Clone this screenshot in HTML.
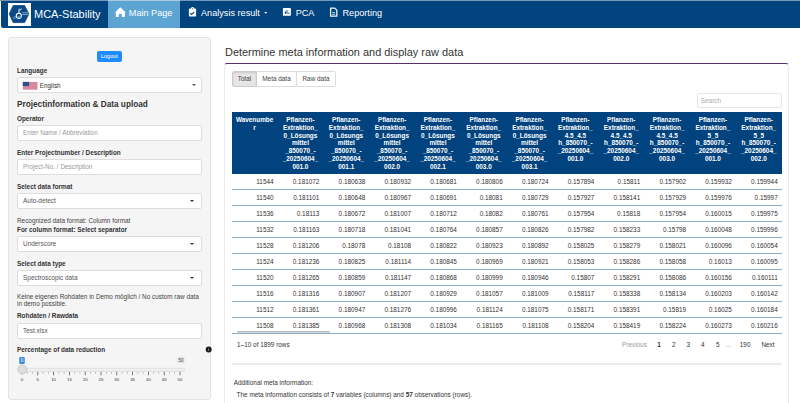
<!DOCTYPE html>
<html><head><meta charset="utf-8">
<style>
*{box-sizing:border-box;margin:0;padding:0}
html,body{width:800px;height:403px;overflow:hidden;background:#fff;font-family:"Liberation Sans",sans-serif;color:#333}
body{position:relative}
.a{position:absolute;white-space:nowrap}
#nav{position:absolute;left:1px;top:0;width:799px;height:28px;background:#01447e;border-top:1px solid #7398bd;border-radius:0 0 0 2px}
#topl{position:absolute;left:0;top:0;width:800px;height:1px;background:#7398bd}
#act{position:absolute;left:107.5px;top:0;width:72.5px;height:28px;background:#5ca5d3;border-top:1px solid #a9cbe3}
#logo{position:absolute;left:8px;top:3px;width:23px;height:23px;background:#fff}
.nt{color:#fff;font-size:9.15px;line-height:11px;top:7.7px}
#well{position:absolute;left:8px;top:37px;width:203px;height:363px;background:#f5f5f5;border:1px solid #e3e3e3;border-radius:3px}
.lb{font-weight:bold;font-size:6.4px;line-height:8px;color:#333}
.tx{font-size:6.4px;line-height:8px;color:#444}
.inp{position:absolute;left:17px;width:185px;height:16px;background:#fff;border:1px solid #ddd;border-radius:2px}
.it{position:absolute;left:5.1px;top:3.4px;font-size:6.4px;line-height:8px;color:#555;white-space:nowrap}
.ph{color:#999}
.caret{position:absolute;right:7.3px;top:5.6px;width:0;height:0;border-left:2.4px solid transparent;border-right:2.4px solid transparent;border-top:2.8px solid #333}
#card{position:absolute;left:224px;top:63px;width:565px;height:360px;background:#fff;border:1px solid #ececec;border-top:1.5px solid #5b2e6f;border-radius:3px 3px 0 0}
.tab{position:absolute;top:71px;height:16px;border:1px solid #ddd;font-size:6.4px;color:#444;text-align:center;line-height:14px;background:#fff}
#thead{position:absolute;left:231.7px;top:111.8px;width:550.3px;height:61.8px;background:#01437f}
.hc{position:absolute;top:115.9px;width:45.83px;text-align:center;font-weight:bold;font-size:6.4px;line-height:7.86px;color:#fff;white-space:nowrap}
.row{position:absolute;left:231.7px;width:550.3px;height:1px;background:#8eadc9}
.c{position:absolute;font-size:6.4px;line-height:15px;color:#333;text-align:right;width:41.9px;white-space:nowrap}
.pg{position:absolute;top:340.6px;font-size:6.4px;line-height:8px;color:#333;white-space:nowrap}
</style></head><body>
<div id="topl"></div><div id="nav"></div>
<div id="act"></div>
<div id="logo"></div>
<div class="a" style="left:34px;top:8.3px;color:#fff;font-size:11px;line-height:13px">MCA-Stability</div>
<div class="a nt" style="left:128.8px">Main Page</div>
<div class="a nt" style="left:201px">Analysis result</div>
<div class="a nt" style="left:295.7px">PCA</div>
<div class="a nt" style="left:342.5px">Reporting</div>

<div id="well"></div>
<div class="a" style="left:97.2px;top:50.9px;width:24.4px;height:10.7px;background:#1f8bff;border-radius:2px;color:#fff;font-size:5.5px;line-height:10.7px;text-align:center">Logout</div>
<div class="a lb" style="left:17px;top:67.3px">Language</div>
<div class="inp" style="top:77px"><div class="it" style="left:21.7px;top:3.8px;color:#333">English</div><div class="caret" style="right:4.9px;top:5.8px;border-left-width:2.1px;border-right-width:2.1px;border-top:2.3px solid #4a5060"></div></div>
<div class="a" style="left:17px;top:99.9px;font-weight:bold;font-size:8.24px;line-height:10px;color:#333">Projectinformation &amp; Data upload</div>
<div class="a lb" style="left:17px;top:115.2px">Operator</div>
<div class="inp" style="top:125px"><div class="it ph">Enter Name / Abbreviation</div></div>
<div class="a lb" style="left:17px;top:148.8px">Enter Projectnumber / Description</div>
<div class="inp" style="top:159px"><div class="it ph">Project-No. / Description</div></div>
<div class="a lb" style="left:17px;top:182.9px">Select data format</div>
<div class="inp" style="top:193px"><div class="it">Auto-detect</div><div class="caret"></div></div>
<div class="a tx" style="left:17px;top:216.7px">Recognized data format: Column format</div>
<div class="a lb" style="left:17px;top:225.8px">For column format: Select separator</div>
<div class="inp" style="top:236px"><div class="it">Underscore</div><div class="caret"></div></div>
<div class="a lb" style="left:17px;top:259.9px">Select data type</div>
<div class="inp" style="top:270px"><div class="it">Spectroscopic data</div><div class="caret"></div></div>
<div class="a tx" style="left:17px;top:293.2px">Keine eigenen Rohdaten in Demo möglich / No custom raw data</div>
<div class="a tx" style="left:17px;top:300.1px">in demo possible.</div>
<div class="a lb" style="left:17px;top:312.4px">Rohdaten / Rawdata</div>
<div class="inp" style="top:323px"><div class="it">Test.xlsx</div></div>
<div class="a lb" style="left:17px;top:346.2px">Percentage of data reduction</div>

<div class="a" style="left:225px;top:46.2px;font-size:10.95px;line-height:13px;color:#333">Determine meta information and display raw data</div>
<div id="card"></div>
<div class="tab" style="left:232px;width:25px;background:#e6e6e6;border-color:#ccc;border-radius:2px 0 0 2px;box-shadow:inset 0 1px 2px rgba(0,0,0,.12)">Total</div>
<div class="tab" style="left:257px;width:40px;border-left:none">Meta data</div>
<div class="tab" style="left:297px;width:39px;border-left:none;border-radius:0 2px 2px 0">Raw data</div>
<div class="a" style="left:697px;top:93px;width:85px;height:15px;border:1px solid #e6e6e6;border-radius:2px;background:#fff"><div class="it ph" style="left:2.8px;top:2.9px;color:#aaa">Search</div></div>
<div id="thead"></div>
<div class="hc" style="left:231.70px">Wavenumbe<br>r</div>
<div class="hc" style="left:277.53px">Pflanzen-<br>Extraktion_<br>0_Lösungs<br>mittel<br>_850070_-<br>_20250604_<br>001.0</div>
<div class="hc" style="left:323.36px">Pflanzen-<br>Extraktion_<br>0_Lösungs<br>mittel<br>_850070_-<br>_20250604_<br>001.1</div>
<div class="hc" style="left:369.19px">Pflanzen-<br>Extraktion_<br>0_Lösungs<br>mittel<br>_850070_-<br>_20250604_<br>002.0</div>
<div class="hc" style="left:415.02px">Pflanzen-<br>Extraktion_<br>0_Lösungs<br>mittel<br>_850070_-<br>_20250604_<br>002.1</div>
<div class="hc" style="left:460.85px">Pflanzen-<br>Extraktion_<br>0_Lösungs<br>mittel<br>_850070_-<br>_20250604_<br>003.0</div>
<div class="hc" style="left:506.68px">Pflanzen-<br>Extraktion_<br>0_Lösungs<br>mittel<br>_850070_-<br>_20250604_<br>003.1</div>
<div class="hc" style="left:552.51px">Pflanzen-<br>Extraktion_<br>4.5_4.5<br>h_850070_-<br>_20250604_<br>001.0</div>
<div class="hc" style="left:598.34px">Pflanzen-<br>Extraktion_<br>4.5_4.5<br>h_850070_-<br>_20250604_<br>002.0</div>
<div class="hc" style="left:644.17px">Pflanzen-<br>Extraktion_<br>4.5_4.5<br>h_850070_-<br>_20250604_<br>003.0</div>
<div class="hc" style="left:690.00px">Pflanzen-<br>Extraktion_<br>5_5<br>h_850070_-<br>_20250604_<br>001.0</div>
<div class="hc" style="left:735.83px">Pflanzen-<br>Extraktion_<br>5_5<br>h_850070_-<br>_20250604_<br>002.0</div>
<div class="c" style="left:231.70px;top:174px">11544</div>
<div class="c" style="left:277.53px;top:174px">0.181072</div>
<div class="c" style="left:323.36px;top:174px">0.180638</div>
<div class="c" style="left:369.19px;top:174px">0.180932</div>
<div class="c" style="left:415.02px;top:174px">0.180681</div>
<div class="c" style="left:460.85px;top:174px">0.180806</div>
<div class="c" style="left:506.68px;top:174px">0.180724</div>
<div class="c" style="left:552.51px;top:174px">0.157894</div>
<div class="c" style="left:598.34px;top:174px">0.15811</div>
<div class="c" style="left:644.17px;top:174px">0.157902</div>
<div class="c" style="left:690.00px;top:174px">0.159932</div>
<div class="c" style="left:735.83px;top:174px">0.159944</div>
<div class="row" style="top:189px"></div>
<div class="c" style="left:231.70px;top:190px">11540</div>
<div class="c" style="left:277.53px;top:190px">0.181101</div>
<div class="c" style="left:323.36px;top:190px">0.180648</div>
<div class="c" style="left:369.19px;top:190px">0.180967</div>
<div class="c" style="left:415.02px;top:190px">0.180691</div>
<div class="c" style="left:460.85px;top:190px">0.18081</div>
<div class="c" style="left:506.68px;top:190px">0.180729</div>
<div class="c" style="left:552.51px;top:190px">0.157927</div>
<div class="c" style="left:598.34px;top:190px">0.158141</div>
<div class="c" style="left:644.17px;top:190px">0.157929</div>
<div class="c" style="left:690.00px;top:190px">0.159976</div>
<div class="c" style="left:735.83px;top:190px">0.15997</div>
<div class="row" style="top:205px"></div>
<div class="c" style="left:231.70px;top:206px">11536</div>
<div class="c" style="left:277.53px;top:206px">0.18113</div>
<div class="c" style="left:323.36px;top:206px">0.180672</div>
<div class="c" style="left:369.19px;top:206px">0.181007</div>
<div class="c" style="left:415.02px;top:206px">0.180712</div>
<div class="c" style="left:460.85px;top:206px">0.18082</div>
<div class="c" style="left:506.68px;top:206px">0.180761</div>
<div class="c" style="left:552.51px;top:206px">0.157954</div>
<div class="c" style="left:598.34px;top:206px">0.15818</div>
<div class="c" style="left:644.17px;top:206px">0.157954</div>
<div class="c" style="left:690.00px;top:206px">0.160015</div>
<div class="c" style="left:735.83px;top:206px">0.159975</div>
<div class="row" style="top:221px"></div>
<div class="c" style="left:231.70px;top:222px">11532</div>
<div class="c" style="left:277.53px;top:222px">0.181163</div>
<div class="c" style="left:323.36px;top:222px">0.180718</div>
<div class="c" style="left:369.19px;top:222px">0.181041</div>
<div class="c" style="left:415.02px;top:222px">0.180764</div>
<div class="c" style="left:460.85px;top:222px">0.180857</div>
<div class="c" style="left:506.68px;top:222px">0.180826</div>
<div class="c" style="left:552.51px;top:222px">0.157982</div>
<div class="c" style="left:598.34px;top:222px">0.158233</div>
<div class="c" style="left:644.17px;top:222px">0.15798</div>
<div class="c" style="left:690.00px;top:222px">0.160048</div>
<div class="c" style="left:735.83px;top:222px">0.159996</div>
<div class="row" style="top:237px"></div>
<div class="c" style="left:231.70px;top:238px">11528</div>
<div class="c" style="left:277.53px;top:238px">0.181206</div>
<div class="c" style="left:323.36px;top:238px">0.18078</div>
<div class="c" style="left:369.19px;top:238px">0.18108</div>
<div class="c" style="left:415.02px;top:238px">0.180822</div>
<div class="c" style="left:460.85px;top:238px">0.180923</div>
<div class="c" style="left:506.68px;top:238px">0.180892</div>
<div class="c" style="left:552.51px;top:238px">0.158025</div>
<div class="c" style="left:598.34px;top:238px">0.158279</div>
<div class="c" style="left:644.17px;top:238px">0.158021</div>
<div class="c" style="left:690.00px;top:238px">0.160096</div>
<div class="c" style="left:735.83px;top:238px">0.160054</div>
<div class="row" style="top:253px"></div>
<div class="c" style="left:231.70px;top:254px">11524</div>
<div class="c" style="left:277.53px;top:254px">0.181236</div>
<div class="c" style="left:323.36px;top:254px">0.180825</div>
<div class="c" style="left:369.19px;top:254px">0.181114</div>
<div class="c" style="left:415.02px;top:254px">0.180845</div>
<div class="c" style="left:460.85px;top:254px">0.180969</div>
<div class="c" style="left:506.68px;top:254px">0.180921</div>
<div class="c" style="left:552.51px;top:254px">0.158053</div>
<div class="c" style="left:598.34px;top:254px">0.158286</div>
<div class="c" style="left:644.17px;top:254px">0.158058</div>
<div class="c" style="left:690.00px;top:254px">0.16013</div>
<div class="c" style="left:735.83px;top:254px">0.160095</div>
<div class="row" style="top:269px"></div>
<div class="c" style="left:231.70px;top:270px">11520</div>
<div class="c" style="left:277.53px;top:270px">0.181265</div>
<div class="c" style="left:323.36px;top:270px">0.180859</div>
<div class="c" style="left:369.19px;top:270px">0.181147</div>
<div class="c" style="left:415.02px;top:270px">0.180868</div>
<div class="c" style="left:460.85px;top:270px">0.180999</div>
<div class="c" style="left:506.68px;top:270px">0.180946</div>
<div class="c" style="left:552.51px;top:270px">0.15807</div>
<div class="c" style="left:598.34px;top:270px">0.158291</div>
<div class="c" style="left:644.17px;top:270px">0.158086</div>
<div class="c" style="left:690.00px;top:270px">0.160156</div>
<div class="c" style="left:735.83px;top:270px">0.160111</div>
<div class="row" style="top:285px"></div>
<div class="c" style="left:231.70px;top:286px">11516</div>
<div class="c" style="left:277.53px;top:286px">0.181316</div>
<div class="c" style="left:323.36px;top:286px">0.180907</div>
<div class="c" style="left:369.19px;top:286px">0.181207</div>
<div class="c" style="left:415.02px;top:286px">0.180929</div>
<div class="c" style="left:460.85px;top:286px">0.181057</div>
<div class="c" style="left:506.68px;top:286px">0.181009</div>
<div class="c" style="left:552.51px;top:286px">0.158117</div>
<div class="c" style="left:598.34px;top:286px">0.158338</div>
<div class="c" style="left:644.17px;top:286px">0.158134</div>
<div class="c" style="left:690.00px;top:286px">0.160203</div>
<div class="c" style="left:735.83px;top:286px">0.160142</div>
<div class="row" style="top:301px"></div>
<div class="c" style="left:231.70px;top:302px">11512</div>
<div class="c" style="left:277.53px;top:302px">0.181361</div>
<div class="c" style="left:323.36px;top:302px">0.180947</div>
<div class="c" style="left:369.19px;top:302px">0.181276</div>
<div class="c" style="left:415.02px;top:302px">0.180996</div>
<div class="c" style="left:460.85px;top:302px">0.181124</div>
<div class="c" style="left:506.68px;top:302px">0.181075</div>
<div class="c" style="left:552.51px;top:302px">0.158171</div>
<div class="c" style="left:598.34px;top:302px">0.158391</div>
<div class="c" style="left:644.17px;top:302px">0.15819</div>
<div class="c" style="left:690.00px;top:302px">0.16025</div>
<div class="c" style="left:735.83px;top:302px">0.160184</div>
<div class="row" style="top:317px"></div>
<div class="c" style="left:231.70px;top:318px">11508</div>
<div class="c" style="left:277.53px;top:318px">0.181385</div>
<div class="c" style="left:323.36px;top:318px">0.180968</div>
<div class="c" style="left:369.19px;top:318px">0.181308</div>
<div class="c" style="left:415.02px;top:318px">0.181034</div>
<div class="c" style="left:460.85px;top:318px">0.181165</div>
<div class="c" style="left:506.68px;top:318px">0.181108</div>
<div class="c" style="left:552.51px;top:318px">0.158204</div>
<div class="c" style="left:598.34px;top:318px">0.158419</div>
<div class="c" style="left:644.17px;top:318px">0.158224</div>
<div class="c" style="left:690.00px;top:318px">0.160273</div>
<div class="c" style="left:735.83px;top:318px">0.160216</div>
<div class="row" style="top:333px"></div>
<div class="a tx" style="left:237.1px;top:340.7px;color:#333">1–10 of 1899 rows</div>
<div class="pg" style="left:622px;color:#999">Previous</div>
<div class="pg" style="left:657.3px;font-weight:bold">1</div>
<div class="pg" style="left:672.1px">2</div>
<div class="pg" style="left:686.6px">3</div>
<div class="pg" style="left:701.1px">4</div>
<div class="pg" style="left:716px">5</div>
<div class="pg" style="left:726px;color:#999">...</div>
<div class="pg" style="left:739.8px">190</div>
<div class="pg" style="left:761.4px">Next</div>
<div class="a" style="left:231.6px;top:363px;width:550.4px;height:2px;background:#ebebeb"></div>
<div class="a tx" style="left:233.8px;top:378.5px;color:#333">Additional meta information:</div>
<div class="a tx" style="left:236.6px;top:391.3px;color:#333">The meta information consists of <b>7</b> variables (columns) and <b>57</b> observations (rows).</div>
<svg class="a" style="left:0;top:0;overflow:visible" width="800" height="403" viewBox="0 0 800 403">
<!-- logo -->
<g transform="translate(7.6,3)">
<path d="M1.6,10.9 L5.6,2.5 L17,2.5 L21.3,10.9 L17,19.6 L5.6,19.6 Z" fill="#0a4984" stroke="#0a4984" stroke-width="0.8" stroke-linejoin="round"/>
<path d="M4.8,14.6 L8.6,12.6 L8.9,13.4 L5.2,15.4 Z M5.3,16 L9,14 L9.3,14.8 L5.9,16.6 Z" fill="#5a8cc0"/>
<path d="M14.6,9.3 H20.6 V10.2 H14.6 Z M14.6,11.1 H20.8 V12 H14.6 Z" fill="#7ea6cc"/>
<circle cx="11.2" cy="12.8" r="2.55" fill="#0f4f8b" stroke="#fff" stroke-width="1.05"/>
<path d="M9.1,13.2 A2.1,2.1 0 0 0 13.3,13.2 Z" fill="#56a2dc"/>
<rect x="10.9" y="7.4" width="0.95" height="2.7" fill="#fff"/>
<path d="M11.2,7.8 L11.6,5.8 L12.6,7.4 L13.5,5.7 L14.2,6" fill="none" stroke="#fff" stroke-width="0.65"/>
</g>
<!-- home -->
<path d="M114.8,12.4 L120.3,7.3 L125.8,12.4 L124.9,12.4 L124.9,16.9 L121.8,16.9 L121.8,14 L118.8,14 L118.8,16.9 L115.9,16.9 L115.9,12.4 Z" fill="#fff"/>
<!-- clipboard -->
<rect x="188.9" y="8.5" width="7.2" height="8.1" rx="0.8" fill="#fff"/>
<circle cx="192.5" cy="8.4" r="1.4" fill="#fff"/>
<circle cx="192.5" cy="8.7" r="0.5" fill="#01447e"/>
<path d="M190.2,13.1 L191.6,14.4 L194.2,11.9" fill="none" stroke="#01447e" stroke-width="1.1"/>
<path d="M264.2,11.9 L267.3,11.9 L265.75,13.7 Z" fill="#fff"/>
<!-- pca -->
<rect x="282.9" y="7.9" width="8" height="7.9" rx="0.9" fill="#fff"/>
<rect x="284.8" y="11.5" width="1.2" height="2.2" fill="#063c75"/>
<rect x="286.5" y="10" width="0.9" height="3.7" fill="#063c75"/>
<rect x="287.4" y="12.8" width="2.3" height="0.9" fill="#1a5a98"/>
<!-- reporting -->
<path d="M330.6,8.1 H334.8 L336.8,10.1 V16.2 H330.6 Z" fill="none" stroke="#eef5fb" stroke-width="1.3" stroke-linejoin="round"/>
<path d="M332.3,12.6 H335.1 M332.3,14.3 H335.1" stroke="#d8e6f2" stroke-width="0.9"/>
<!-- flag -->
<rect x="22.8" y="81.9" width="14.7" height="7.8" fill="#d88a9d"/>
<rect x="22.8" y="81.9" width="6.3" height="4.2" fill="#2d4f8c"/>
<!-- info icon -->
<circle cx="208.7" cy="349.5" r="3" fill="#1b1b1b"/>
<rect x="208.3" y="348.4" width="0.8" height="2.4" fill="#8a9bb0"/>
<!-- slider -->
<rect x="22" y="368.3" width="162.7" height="3.1" rx="1.5" fill="#efefef" stroke="#d2d2d2" stroke-width="0.6"/>
<rect x="19.25" y="357" width="5.5" height="7.1" rx="1" fill="#3a8bd2"/>
<text x="22" y="362.3" font-size="4.6" fill="#fff" text-anchor="middle" font-family="Liberation Sans">0</text>
<rect x="177.4" y="356.7" width="7.1" height="6.5" rx="1" fill="#e4e4e4"/>
<text x="180.95" y="361.7" font-size="4.6" fill="#555" text-anchor="middle" font-family="Liberation Sans">50</text>
<rect x="26.97" y="372" width="0.6" height="1.8" fill="#999"/>
<rect x="32.23" y="372" width="0.6" height="1.8" fill="#999"/>
<text x="22.00" y="381.2" font-size="4.4" fill="#333" text-anchor="middle" font-family="Liberation Sans">0</text>
<rect x="37.40" y="371.8" width="0.8" height="3.5" fill="#555"/>
<rect x="42.77" y="372" width="0.6" height="1.8" fill="#999"/>
<rect x="48.03" y="372" width="0.6" height="1.8" fill="#999"/>
<text x="37.80" y="381.2" font-size="4.4" fill="#333" text-anchor="middle" font-family="Liberation Sans">5</text>
<rect x="53.20" y="371.8" width="0.8" height="3.5" fill="#555"/>
<rect x="58.57" y="372" width="0.6" height="1.8" fill="#999"/>
<rect x="63.83" y="372" width="0.6" height="1.8" fill="#999"/>
<text x="53.60" y="381.2" font-size="4.4" fill="#333" text-anchor="middle" font-family="Liberation Sans">10</text>
<rect x="69.00" y="371.8" width="0.8" height="3.5" fill="#555"/>
<rect x="74.37" y="372" width="0.6" height="1.8" fill="#999"/>
<rect x="79.63" y="372" width="0.6" height="1.8" fill="#999"/>
<text x="69.40" y="381.2" font-size="4.4" fill="#333" text-anchor="middle" font-family="Liberation Sans">15</text>
<rect x="84.80" y="371.8" width="0.8" height="3.5" fill="#555"/>
<rect x="90.17" y="372" width="0.6" height="1.8" fill="#999"/>
<rect x="95.43" y="372" width="0.6" height="1.8" fill="#999"/>
<text x="85.20" y="381.2" font-size="4.4" fill="#333" text-anchor="middle" font-family="Liberation Sans">20</text>
<rect x="100.60" y="371.8" width="0.8" height="3.5" fill="#555"/>
<rect x="105.97" y="372" width="0.6" height="1.8" fill="#999"/>
<rect x="111.23" y="372" width="0.6" height="1.8" fill="#999"/>
<text x="101.00" y="381.2" font-size="4.4" fill="#333" text-anchor="middle" font-family="Liberation Sans">25</text>
<rect x="116.40" y="371.8" width="0.8" height="3.5" fill="#555"/>
<rect x="121.77" y="372" width="0.6" height="1.8" fill="#999"/>
<rect x="127.03" y="372" width="0.6" height="1.8" fill="#999"/>
<text x="116.80" y="381.2" font-size="4.4" fill="#333" text-anchor="middle" font-family="Liberation Sans">30</text>
<rect x="132.20" y="371.8" width="0.8" height="3.5" fill="#555"/>
<rect x="137.57" y="372" width="0.6" height="1.8" fill="#999"/>
<rect x="142.83" y="372" width="0.6" height="1.8" fill="#999"/>
<text x="132.60" y="381.2" font-size="4.4" fill="#333" text-anchor="middle" font-family="Liberation Sans">35</text>
<rect x="148.00" y="371.8" width="0.8" height="3.5" fill="#555"/>
<rect x="153.37" y="372" width="0.6" height="1.8" fill="#999"/>
<rect x="158.63" y="372" width="0.6" height="1.8" fill="#999"/>
<text x="148.40" y="381.2" font-size="4.4" fill="#333" text-anchor="middle" font-family="Liberation Sans">40</text>
<rect x="163.80" y="371.8" width="0.8" height="3.5" fill="#555"/>
<rect x="169.17" y="372" width="0.6" height="1.8" fill="#999"/>
<rect x="174.43" y="372" width="0.6" height="1.8" fill="#999"/>
<text x="164.20" y="381.2" font-size="4.4" fill="#333" text-anchor="middle" font-family="Liberation Sans">45</text>
<rect x="179.60" y="371.8" width="0.8" height="3.5" fill="#555"/>
<text x="180.00" y="381.2" font-size="4.4" fill="#333" text-anchor="middle" font-family="Liberation Sans">50</text>
<circle cx="22.25" cy="369.5" r="4.5" fill="#dedede" stroke="#bdbdbd" stroke-width="0.7"/>
<path d="M21.4,373.9 L23.1,373.9 L22.25,375 Z" fill="#aaa"/>
<!-- scroll thumb -->
<rect x="237.1" y="331" width="92.7" height="1.6" fill="#bcbcbc"/>
</svg>
</body></html>
